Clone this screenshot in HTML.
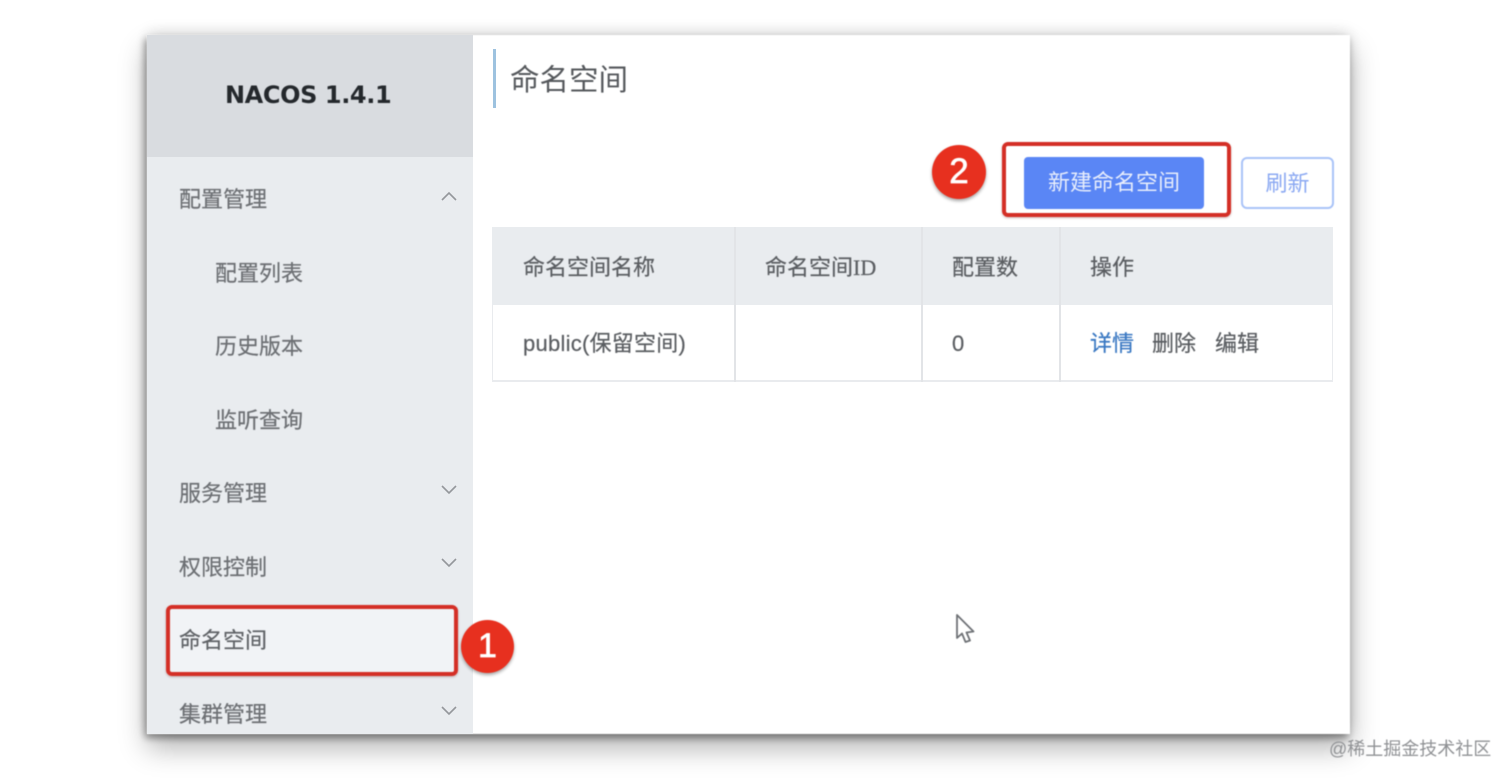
<!DOCTYPE html>
<html><head><meta charset="utf-8"><style>
html,body{margin:0;padding:0;background:#fff;width:1512px;height:781px;overflow:hidden}
body{position:relative;font-family:"Liberation Sans","Noto Sans CJK SC",sans-serif}
.a{position:absolute;white-space:nowrap}
.t{position:absolute;white-space:nowrap;font-size:22px;line-height:30px;color:#6c6f73;filter:blur(.5px);margin-top:1px;-webkit-text-stroke:.2px currentColor}
.h{color:#5a5d61}
.red{position:absolute;box-sizing:border-box;border:4px solid #d42f26;border-radius:6px;filter:blur(.5px);box-shadow:0 1px 2px rgba(90,20,20,.3)}
.c{position:absolute;border-radius:50%;background:#e7301f;color:#fff;text-align:center;box-shadow:0 2px 3px rgba(0,0,0,.35);font-size:35px;-webkit-text-stroke:.7px #fff;filter:blur(.4px)}
svg{position:absolute}
</style></head><body>
<div class="a" style="left:147px;top:35px;width:1203px;height:699px;background:#fff;box-shadow:-2px 4px 7px rgba(0,0,0,.36),0 14px 26px rgba(0,0,0,.3),0 -2px 14px rgba(0,0,0,.14);filter:blur(.4px)"></div>
<div class="a" style="left:147px;top:35px;width:326px;height:699px;background:#e9ecef"></div>
<div class="a" style="left:147px;top:35px;width:326px;height:122px;background:#d9dce0"></div>
<div class="a" style="left:168px;top:606px;width:289px;height:68px;background:#f1f3f6"></div>
<div class="a" style="left:225px;top:35px;line-height:120px;font-weight:bold;color:#24282c;font-family:'DejaVu Sans',sans-serif;letter-spacing:-.4px;filter:blur(.4px);font-size:24px">NACOS 1.4.1</div>
<div class="t" style="left:179px;top:184px">配置管理</div>
<div class="t" style="left:215px;top:258px">配置列表</div>
<div class="t" style="left:215px;top:331px">历史版本</div>
<div class="t" style="left:215px;top:405px">监听查询</div>
<div class="t" style="left:179px;top:478px">服务管理</div>
<div class="t" style="left:179px;top:552px">权限控制</div>
<div class="t" style="left:179px;top:625px;color:#5f6266">命名空间</div>
<div class="t" style="left:179px;top:699px">集群管理</div>
<svg style="left:440px;top:189px" width="18" height="14" fill="none" stroke="#94979b" stroke-width="1.6"><path d="M2 11L9 4L16 11"/></svg>
<svg style="left:440px;top:483px" width="18" height="14" fill="none" stroke="#94979b" stroke-width="1.6"><path d="M2 3L9 10L16 3"/></svg>
<svg style="left:440px;top:556px" width="18" height="14" fill="none" stroke="#94979b" stroke-width="1.6"><path d="M2 3L9 10L16 3"/></svg>
<svg style="left:440px;top:704px" width="18" height="14" fill="none" stroke="#94979b" stroke-width="1.6"><path d="M2 3L9 10L16 3"/></svg>
<div class="red" style="left:166px;top:605px;width:292px;height:71px"></div>
<div class="c" style="left:461px;top:620px;width:53px;height:53px;line-height:53px;font-size:34px">1</div>

<div class="a" style="left:493px;top:49px;width:3px;height:59px;background:#9dc2df"></div>
<div class="a" style="left:510px;top:61px;font-size:29.5px;line-height:40px;color:#55585c;filter:blur(.4px)">命名空间</div>
<div class="c" style="left:932px;top:145px;width:54px;height:54px;line-height:53px">2</div>
<div class="red" style="left:1002px;top:142px;width:229px;height:75px"></div>
<div class="a" style="left:1024px;top:157px;width:180px;height:52px;line-height:52px;background:#5a86f5;border-radius:4px;color:#e8eefc;text-align:center;font-size:22px;filter:blur(.4px)">新建命名空间</div>
<div class="a" style="left:1241px;top:157px;width:93px;height:52px;box-sizing:border-box;border:2px solid #a9c3f8;border-radius:6px;line-height:49px;color:#8aa8f2;text-align:center;font-size:22px;filter:blur(.4px)">刷新</div>

<div class="a" style="left:492px;top:227px;width:841px;height:155px;box-sizing:border-box;border:1px solid #e9ebee;border-bottom-width:2px"></div>
<div class="a" style="left:492px;top:227px;width:841px;height:78px;background:#e9ecef"></div>
<div class="a" style="left:734px;top:227px;width:2px;height:155px;background:#e2e4e7"></div>
<div class="a" style="left:921px;top:227px;width:2px;height:155px;background:#e2e4e7"></div>
<div class="a" style="left:1059px;top:227px;width:2px;height:155px;background:#e2e4e7"></div>
<div class="t h" style="left:523px;top:252px">命名空间名称</div>
<div class="t h" style="left:765px;top:252px">命名空间<span style="font-family:'Liberation Serif',serif">ID</span></div>
<div class="t h" style="left:952px;top:252px">配置数</div>
<div class="t h" style="left:1090px;top:252px">操作</div>
<div class="t h" style="left:523px;top:328px;letter-spacing:.25px">public(保留空间)</div>
<div class="t h" style="left:952px;top:328px">0</div>
<div class="t" style="left:1090px;top:328px;color:#3a78c2">详情</div>
<div class="t h" style="left:1152px;top:328px">删除</div>
<div class="t h" style="left:1215px;top:328px">编辑</div>

<svg style="left:950px;top:610px;filter:blur(.4px)" width="30" height="36" fill="#fff" stroke="#6f7276" stroke-width="1.8" stroke-linejoin="round"><path d="M7 5V28L12 23.5L15.5 32L20 30.5L16.5 22.5L23.5 21.5Z"/></svg>
<div class="a" style="left:1329px;top:738px;font-size:18px;line-height:22px;color:#8f9194;filter:blur(.4px)">@稀土掘金技术社区</div>
</body></html>
